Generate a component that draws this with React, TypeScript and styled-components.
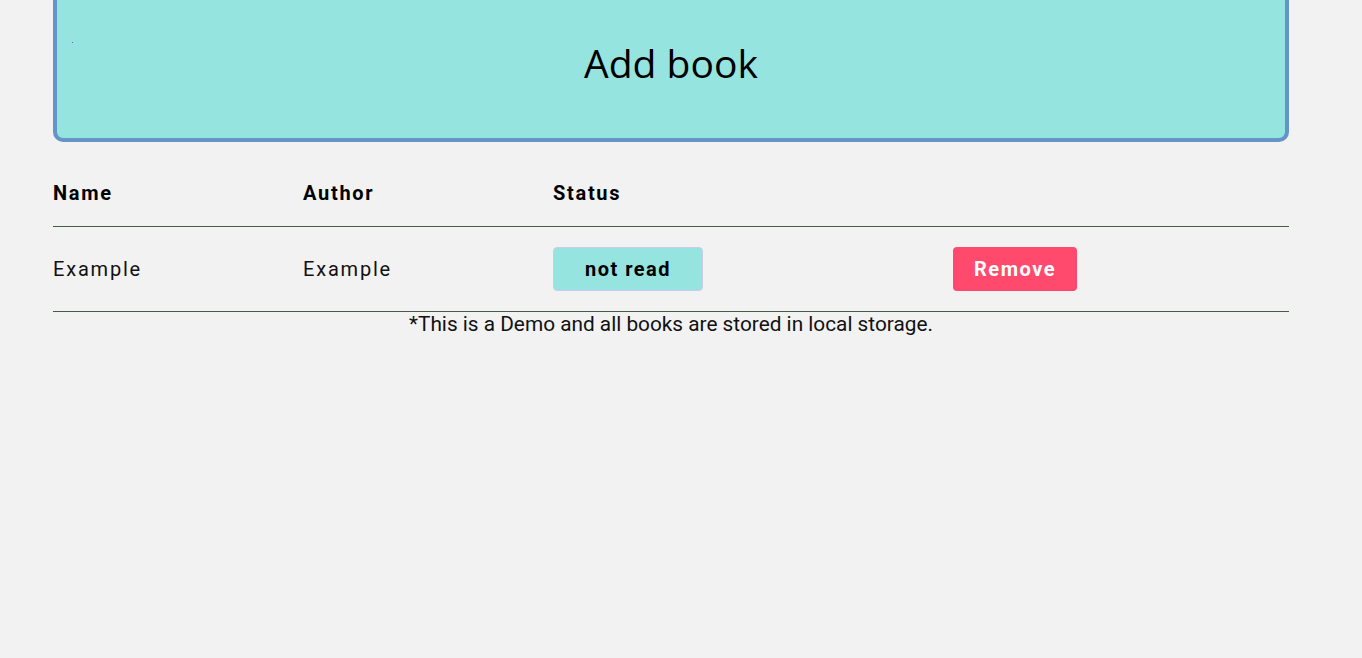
import styled, { createGlobalStyle } from "styled-components";

const GlobalStyle = createGlobalStyle`
  html, body {
    margin: 0;
    padding: 0;
    background: #f2f2f2;
    font-family: Roboto, "Liberation Sans", sans-serif;
  }
`;

const books = [{ name: "Example", author: "Example", read: false }];

export default function App() {
  return (
    <>
      <GlobalStyle />
      <Page>
        <AddButton>
          <Dot />
          Add book
        </AddButton>
        <Table>
          <thead>
            <HeadRow>
              <Th>Name</Th>
              <Th>Author</Th>
              <Th>Status</Th>
              <Th />
            </HeadRow>
          </thead>
          <tbody>
            {books.map((book, i) => (
              <BodyRow key={i}>
                <Td>{book.name}</Td>
                <Td>{book.author}</Td>
                <Td>
                  <StatusButton>{book.read ? "read" : "not read"}</StatusButton>
                </Td>
                <Td>
                  <RemoveButton>Remove</RemoveButton>
                </Td>
              </BodyRow>
            ))}
          </tbody>
        </Table>
        <Note>*This is a Demo and all books are stored in local storage.</Note>
      </Page>
    </>
  );
}

const Page = styled.div`
  width: 1236px;
  margin-left: 53px;
  display: flex;
  flex-direction: column;
`;

const AddButton = styled.div`
  position: relative;
  box-sizing: border-box;
  height: 182px;
  margin-top: -40px;
  padding-top: 22px;
  display: flex;
  align-items: center;
  justify-content: center;
  background: #96e4df;
  border: 4px solid #6495c8;
  border-radius: 10px;
  font-family: "Open Sans", sans-serif;
  font-size: 39px;
  color: #000;
`;

const Dot = styled.span`
  position: absolute;
  left: 15px;
  top: 78px;
  width: 1px;
  height: 1px;
  background: #8a4cff;
`;

const Table = styled.table`
  margin-top: 19px;
  width: 100%;
  border-collapse: collapse;
  table-layout: fixed;
`;

const HeadRow = styled.tr`
  height: 65px;
  border-bottom: 1px solid #4a5a4a;
`;

const Th = styled.th`
  width: 250px;
  padding: 0;
  text-align: left;
  font-size: 20px;
  font-weight: 700;
  letter-spacing: 1.7px;
  color: #000;
  &:nth-child(3) {
    width: 400px;
  }
  &:last-child {
    width: auto;
  }
`;

const BodyRow = styled.tr`
  height: 85px;
  border-bottom: 1px solid #4a5a4a;
`;

const Td = styled.td`
  padding: 0;
  font-size: 20px;
  letter-spacing: 1.8px;
  color: #111;
`;

const BaseButton = styled.button`
  height: 44px;
  border-radius: 4px;
  font-family: Roboto, "Liberation Sans", sans-serif;
  font-size: 20px;
  font-weight: 700;
  letter-spacing: 1.5px;
  cursor: pointer;
`;

const StatusButton = styled(BaseButton)`
  width: 150px;
  background: #96e4df;
  border: 1px solid #c8ccec;
  color: #000;
`;

const RemoveButton = styled(BaseButton)`
  width: 124px;
  background: #ff4a6e;
  border: none;
  color: #fff;
`;

const Note = styled.div`
  text-align: center;
  margin-top: 0;
  font-size: 20.8px;
  color: #111;
`;
